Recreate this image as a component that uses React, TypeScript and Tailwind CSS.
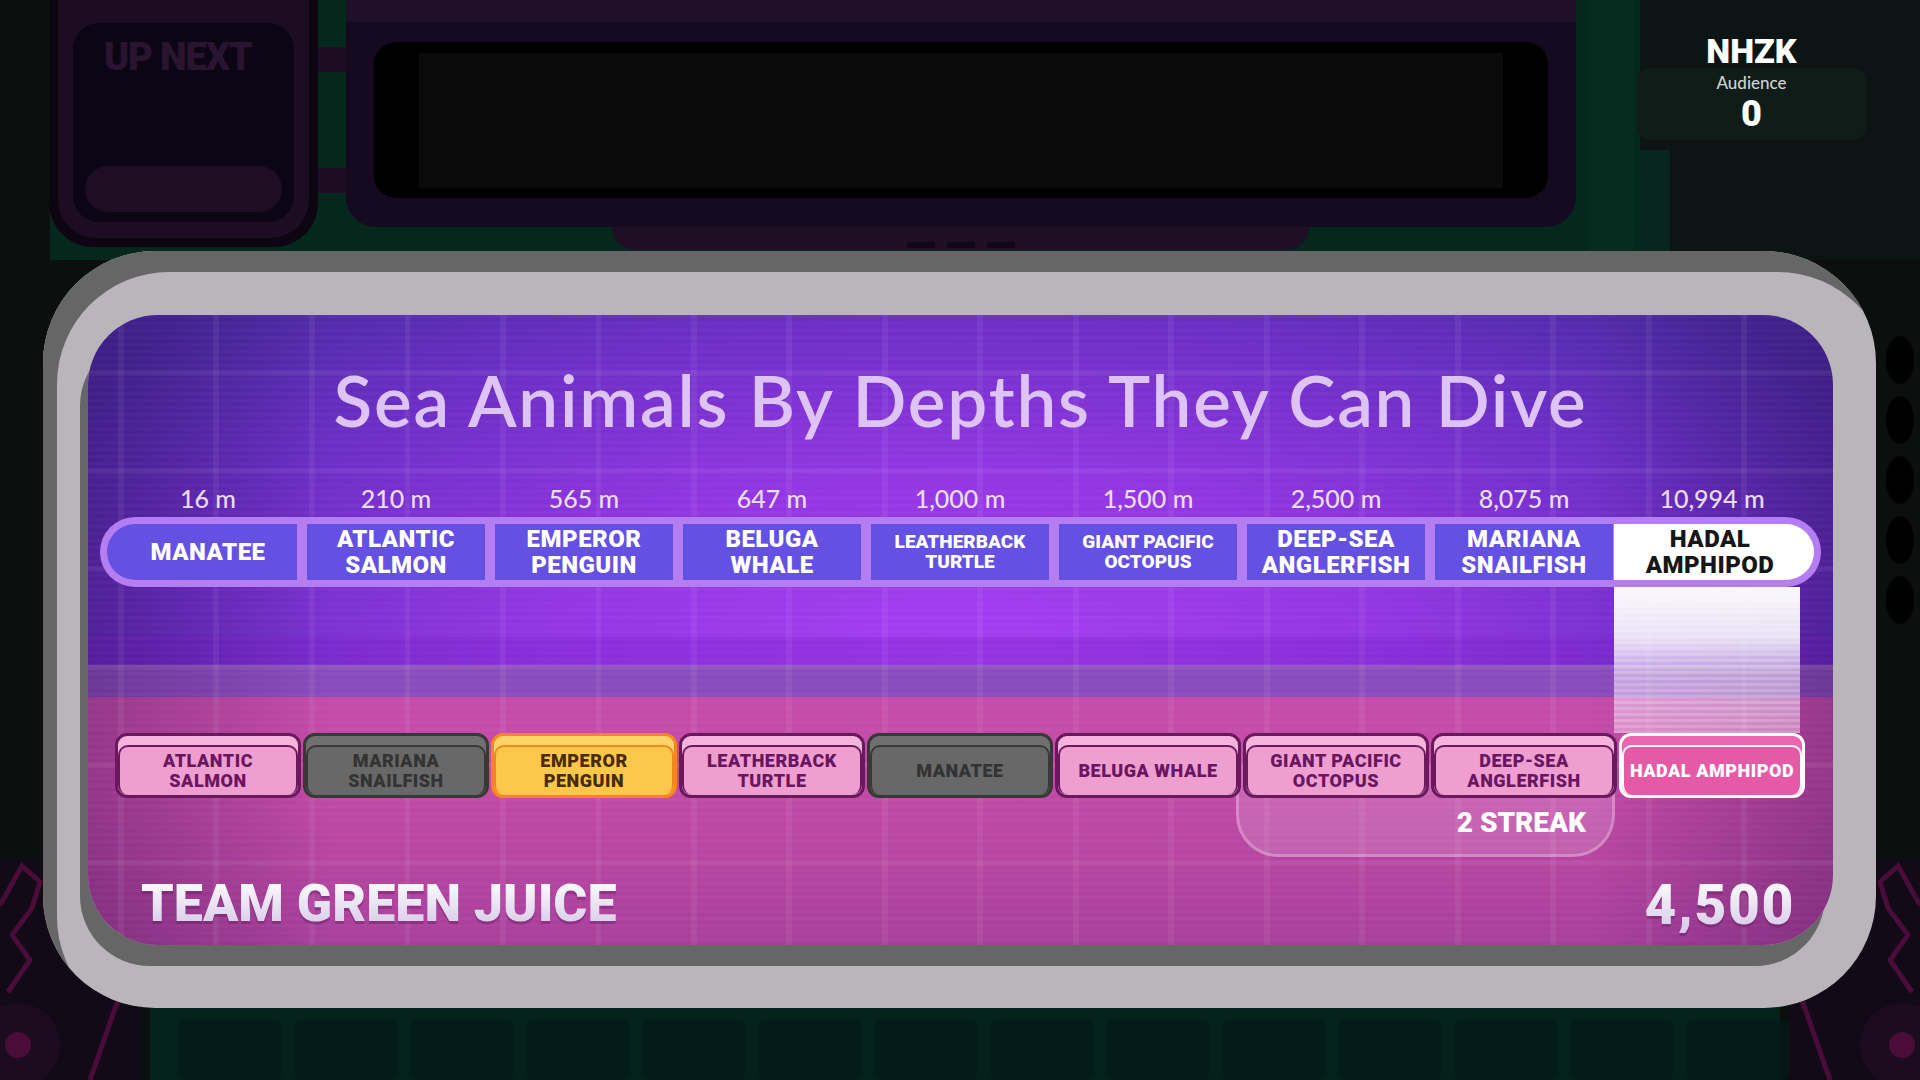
import React from 'react';

type Tone = 'pink' | 'grey' | 'gold' | 'hot';

const heavy = "font-['Roboto',sans-serif] font-black";

const columns = [
  { depth: '16 m', name: ['MANATEE'] },
  { depth: '210 m', name: ['ATLANTIC', 'SALMON'] },
  { depth: '565 m', name: ['EMPEROR', 'PENGUIN'] },
  { depth: '647 m', name: ['BELUGA', 'WHALE'] },
  { depth: '1,000 m', name: ['LEATHERBACK', 'TURTLE'], small: true },
  { depth: '1,500 m', name: ['GIANT PACIFIC', 'OCTOPUS'], small: true },
  { depth: '2,500 m', name: ['DEEP-SEA', 'ANGLERFISH'] },
  { depth: '8,075 m', name: ['MARIANA', 'SNAILFISH'] },
  { depth: '10,994 m', name: ['HADAL', 'AMPHIPOD'], active: true },
];

const guesses: { label: string[]; tone: Tone }[] = [
  { label: ['ATLANTIC', 'SALMON'], tone: 'pink' },
  { label: ['MARIANA', 'SNAILFISH'], tone: 'grey' },
  { label: ['EMPEROR', 'PENGUIN'], tone: 'gold' },
  { label: ['LEATHERBACK', 'TURTLE'], tone: 'pink' },
  { label: ['MANATEE'], tone: 'grey' },
  { label: ['BELUGA WHALE'], tone: 'pink' },
  { label: ['GIANT PACIFIC', 'OCTOPUS'], tone: 'pink' },
  { label: ['DEEP-SEA', 'ANGLERFISH'], tone: 'pink' },
  { label: ['HADAL AMPHIPOD'], tone: 'hot' },
];

const toneStyles: Record<Tone, { outer: string; face: string; text: string }> = {
  pink: {
    outer: 'border-[#6a1a5c] bg-[#f6b3dc]',
    face: 'border-[#6a1a5c] bg-[#ef9ed0]',
    text: 'text-[#6a1560]',
  },
  grey: {
    outer: 'border-[#383838] bg-[#707070]',
    face: 'border-[#383838] bg-[#686868]',
    text: 'text-[#333333]',
  },
  gold: {
    outer: 'border-[#f5861f] bg-[#fdd468]',
    face: 'border-[#f5861f] bg-[#fcc84a]',
    text: 'text-[#4a2a00]',
  },
  hot: {
    outer: 'border-white bg-[#ea66b0]',
    face: 'border-white bg-[#e45aa6]',
    text: 'text-white',
  },
};

const GuessCard = ({ label, tone }: { label: string[]; tone: Tone }) => {
  const s = toneStyles[tone];
  return (
    <div className={`mx-[1px] h-[65px] rounded-[12px] border-[3px] pt-[9px] ${s.outer}`}>
      <div
        className={`flex h-full flex-col items-center justify-center rounded-[10px] border-2 border-b-0 text-[18px] leading-[20px] tracking-[0.03em] ${heavy} ${s.face} ${s.text}`}
      >
        {label.map((l) => (
          <span key={l}>{l}</span>
        ))}
      </div>
    </div>
  );
};

const Backdrop = () => (
  <svg className="pointer-events-none absolute inset-0" width="1920" height="1080" viewBox="0 0 1920 1080">
    <rect width="1920" height="1080" fill="#0b100f" />
    <rect x="50" y="0" width="1590" height="260" fill="#05281d" />
    <rect x="1640" y="0" width="280" height="260" fill="#0c1513" />
    <rect x="1588" y="0" width="46" height="260" fill="#062c20" />
    <rect x="1640" y="150" width="30" height="110" fill="#07251c" />
    <rect x="150" y="1000" width="1630" height="80" fill="#05221a" />
    {[0, 1, 2, 3, 4, 5, 6, 7, 8, 9, 10, 11, 12, 13].map((i) => (
      <rect key={i} x={178 + i * 116} y="1020" width="104" height="60" rx="8" fill="#04191a" opacity="0.7" />
    ))}
    <rect x="0" y="860" width="140" height="220" fill="#120a16" />
    <rect x="1790" y="860" width="130" height="220" fill="#120a16" />
    <polyline points="0,905 22,866 40,882 32,908 12,935 30,960 8,992" fill="none" stroke="#4a0c38" strokeWidth="5" />
    <circle cx="18" cy="1045" r="42" fill="#1b0c20" />
    <circle cx="18" cy="1045" r="13" fill="#4a0c38" />
    <line x1="118" y1="1000" x2="90" y2="1080" stroke="#4a0c38" strokeWidth="5" />
    <polyline points="1920,905 1898,866 1880,882 1888,908 1908,935 1890,960 1912,992" fill="none" stroke="#4a0c38" strokeWidth="5" />
    <circle cx="1902" cy="1045" r="42" fill="#1b0c20" />
    <circle cx="1902" cy="1045" r="13" fill="#4a0c38" />
    <line x1="1802" y1="1000" x2="1830" y2="1080" stroke="#4a0c38" strokeWidth="5" />
    {[360, 420, 480, 540, 600].map((y) => (
      <ellipse key={y} cx="1900" cy={y} rx="14" ry="24" fill="#000000" />
    ))}
  </svg>
);

const TopBar = () => (
  <div className="flex h-[251px] items-start">
    <div className="ml-[49px] flex items-start">
      <div className="h-[247px] w-[269px] rounded-b-[44px] bg-[#0d0612] p-[9px] pt-0">
        <div className="flex h-[238px] flex-col rounded-b-[38px] bg-[#1c0d22] px-[15px] pt-[23px] pb-[16px]">
          <div className="flex flex-1 flex-col rounded-[26px] bg-[#0b0514] px-[12px] pb-[10px]">
            <div className={`mt-[15px] pl-[19px] text-[38px] leading-none tracking-[-0.03em] text-[#2a1530] ${heavy}`}>
              UP NEXT
            </div>
            <div className="mt-auto h-[46px] rounded-full bg-[#1e0e24]" />
          </div>
        </div>
      </div>
      <div className="flex h-[200px] w-[28px] flex-col justify-between pt-[47px]">
        <div className="h-[25px] bg-[#1c0d22]" />
        <div className="mb-[7px] h-[25px] bg-[#1c0d22]" />
      </div>
    </div>
    <div className="flex w-[1230px] flex-col">
      <div className="h-[227px] rounded-b-[30px] bg-[#150a20] px-[28px] pt-[42px] shadow-[inset_0_22px_0_#1f0f27]">
        <div className="h-[156px] rounded-[22px] bg-black px-[45px] pt-[11px]">
          <div className="h-[135px] bg-[#0b0b0b]" />
        </div>
      </div>
      <div className="ml-[266px] flex h-[23px] w-[697px] items-end justify-center gap-[12px] rounded-b-[22px] bg-[#1e0f24] pb-[2px]">
        <div className="h-[6px] w-[28px] bg-[#120818]" />
        <div className="h-[6px] w-[28px] bg-[#120818]" />
        <div className="h-[6px] w-[28px] bg-[#120818]" />
      </div>
    </div>
    <div className="ml-[61px] flex w-[229px] flex-col items-center pt-[34px]">
      <div className={`text-[34px] leading-none text-white ${heavy}`}>NHZK</div>
      <div className="flex h-[72px] w-full flex-col items-center rounded-[14px] bg-[#0f1c18] pt-[6px]">
        <div className="text-[17px] leading-none font-medium text-[#d2d2d2]">Audience</div>
        <div className={`mt-[5px] text-[36px] leading-none text-white ${heavy}`}>0</div>
      </div>
    </div>
  </div>
);

const Board = () => (
  <div className="ml-[43px] h-[757px] w-[1833px] rounded-[112px] bg-[#b9b5bb] pt-[64px] pr-[43px] pb-[63px] pl-[45px] shadow-[inset_14px_21px_0_#666666]">
    <div className="h-[630px] overflow-hidden rounded-[70px] shadow-[-8px_21px_0_#666666] [background-image:repeating-linear-gradient(90deg,transparent_0_30px,rgba(255,255,255,0.055)_30px_36px,transparent_36px_95.5px),repeating-linear-gradient(180deg,transparent_0_55px,rgba(255,255,255,0.05)_55px_61px,transparent_61px_98px),repeating-linear-gradient(180deg,rgba(255,255,255,0.025)_0_3px,transparent_3px_7px),linear-gradient(90deg,rgba(30,0,60,0.28),transparent_14%,transparent_86%,rgba(30,0,60,0.28)),linear-gradient(180deg,transparent_0_322px,rgba(120,30,200,0.35)_322px_350px,#8a4cbc_350px,#8a4cbc_382px,#c54ca9_382px,#c24aa7_75%,#a8409b_100%),radial-gradient(ellipse_62%_75%_at_50%_55%,#a63ff2_0%,#9236e2_40%,#6a2ec4_75%,#4a2aa2_100%)]">
      <div className="mt-[49px] text-center text-[71px] leading-none font-semibold tracking-[0.025em] text-[#dec3f7]">
        Sea Animals By Depths They Can Dive
      </div>

      <div className="mx-[26px] mt-[51px] grid grid-cols-[repeat(9,188px)]">
        {columns.map((c) => (
          <div key={c.depth} className="text-center text-[25px] leading-none font-medium text-[#ecdcfb]">
            {c.depth}
          </div>
        ))}
      </div>

      <div className="mx-[12px] mt-[6px] rounded-full bg-[#b47ef2] p-[7px]">
        <div className="grid grid-cols-[190px_repeat(7,178px)_191px] gap-x-[10px]">
          {columns.map((c, i) => (
            <div
              key={c.depth}
              className={`flex h-[56px] flex-col items-center justify-center text-center uppercase ${heavy} ${
                c.active ? '-ml-[9px] rounded-r-full bg-white pr-[8px] text-[#161616]' : 'bg-[#6450e2] text-white'
              } ${i === 0 ? 'rounded-l-full pl-[12px]' : ''} ${
                c.small ? 'text-[19px] leading-[20px]' : 'text-[24px] leading-[26px] tracking-[0.02em]'
              }`}
            >
              {c.name.map((n) => (
                <span key={n}>{n}</span>
              ))}
            </div>
          ))}
        </div>
      </div>

      <div className="mx-[26px] grid h-[146px] grid-cols-[repeat(9,188px)]">
        <div className="col-start-9 -ml-[4px] mr-[6px] [background-image:repeating-linear-gradient(180deg,rgba(255,255,255,0.18)_0_3px,transparent_3px_6px),linear-gradient(180deg,rgba(255,255,255,0.97)_0%,rgba(255,255,255,0.85)_35%,rgba(240,225,250,0.6)_60%,rgba(255,220,245,0.45)_100%)]" />
      </div>

      <div className="relative z-10 mx-[26px] grid grid-cols-[repeat(9,188px)]">
        {guesses.map((g) => (
          <GuessCard key={g.label.join(' ')} label={g.label} tone={g.tone} />
        ))}
      </div>

      <div className="mx-[26px] -mt-[33px] grid grid-cols-[repeat(9,188px)]">
        <div className="col-span-2 col-start-7 -ml-[6px] mr-[3px] flex h-[92px] items-start justify-end rounded-b-[42px] border-[3px] border-t-0 border-white/25 bg-white/15 pt-[44px] pr-[26px]">
          <span className={`text-[28px] leading-none text-white ${heavy}`}>2 STREAK</span>
        </div>
      </div>

      <div className="mt-[21px] flex items-start justify-between pr-[38px] pl-[53px]">
        <span
          className={`bg-gradient-to-b from-white to-[#d4c8e6] bg-clip-text text-[52px] leading-none text-transparent drop-shadow-[0_3px_0_rgba(90,20,90,0.35)] ${heavy}`}
        >
          TEAM GREEN JUICE
        </span>
        <span
          className={`bg-gradient-to-b from-white to-[#d4c8e6] bg-clip-text text-[55px] leading-none tracking-[0.03em] text-transparent drop-shadow-[0_3px_0_rgba(90,20,90,0.35)] ${heavy}`}
        >
          4,500
        </span>
      </div>
    </div>
  </div>
);

export default function App() {
  return (
    <div className="relative h-[1080px] w-[1920px] overflow-hidden font-['Lato',sans-serif]">
      <Backdrop />
      <div className="relative">
        <TopBar />
        <Board />
      </div>
    </div>
  );
}
